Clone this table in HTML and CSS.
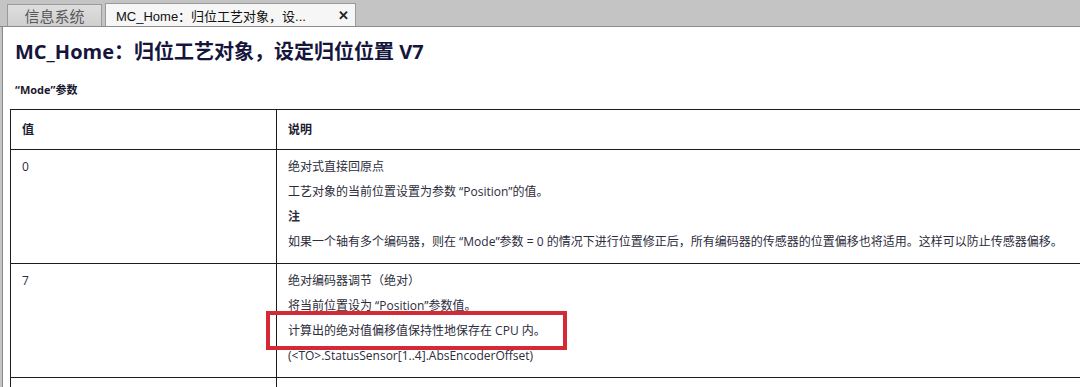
FILE: index.html
```html
<!DOCTYPE html>
<html lang="zh-CN">
<head>
<meta charset="utf-8">
<title>MC_Home</title>
<link rel="stylesheet" href="styles.css">
</head>
<body>
<div class="tabbar">
  <div class="tab tab-inactive">信息系统</div>
  <div class="tab tab-active"><span class="tab-label">MC_Home：归位工艺对象，设...</span><span class="tab-close">✕</span></div>
</div>
<div class="page">
  <h1 class="title">MC_Home：归位工艺对象，设定归位位置 V7</h1>
  <p class="caption">“Mode”参数</p>
  <div class="table-wrap">
    <table class="params">
      <thead>
        <tr><th class="col-val">值</th><th class="col-desc">说明</th></tr>
      </thead>
      <tbody>
        <tr>
          <td class="col-val"><p>0</p></td>
          <td class="col-desc">
            <p>绝对式直接回原点</p>
            <p>工艺对象的当前位置设置为参数 “Position”的值。</p>
            <p class="note">注</p>
            <p>如果一个轴有多个编码器，则在 “Mode”参数 = 0 的情况下进行位置修正后，所有编码器的传感器的位置偏移也将适用。这样可以防止传感器偏移。</p>
          </td>
        </tr>
        <tr>
          <td class="col-val"><p>7</p></td>
          <td class="col-desc">
            <p>绝对编码器调节（绝对）</p>
            <p>将当前位置设为 “Position”参数值。</p>
            <p><span class="highlight">计算出的绝对值偏移值保持性地保存在 CPU 内。</span></p>
            <p>(&lt;TO&gt;.StatusSensor[1..4].AbsEncoderOffset)</p>
          </td>
        </tr>
        <tr class="last">
          <td class="col-val"></td>
          <td class="col-desc"></td>
        </tr>
      </tbody>
    </table>
  </div>
</div>
</body>
</html>
```

FILE: styles.css
```css
* { box-sizing: border-box; }

html, body {
  margin: 0;
  padding: 0;
  width: 1080px;
  height: 387px;
  overflow: hidden;
  background: #c4c4c4;
  font-family: "Open Sans", "Noto Sans CJK SC", sans-serif;
}

.tabbar {
  height: 27px;
  display: flex;
  align-items: flex-end;
  padding-left: 7px;
  gap: 3px;
  border-bottom: 1px solid #8c8c8c;
  background: #c4c4c4;
}

.tab {
  height: 22px;
  display: flex;
  align-items: center;
  border: 1px solid #9a9a9a;
  border-bottom: none;
}

.tab-inactive {
  width: 95px;
  justify-content: center;
  background: linear-gradient(#dedede, #cfcfcf);
  color: #5a5a5a;
  font-family: "Noto Sans CJK SC", sans-serif;
  font-size: 15px;
}

.tab-active {
  width: 251px;
  height: 23px;
  background: #f6f6f6;
  padding: 0 6px 0 10px;
  justify-content: space-between;
  color: #111;
  font-size: 13px;
  font-family: "Liberation Sans", "Noto Sans CJK SC", sans-serif;
}

.tab-close {
  font-size: 13px;
  font-weight: bold;
  color: #222;
}

.page {
  margin-left: 2px;
  height: 360px;
  background: #fff;
  border-left: 1px solid #8a8a8a;
  padding: 12px 0 0 12px;
  overflow: hidden;
}

.title {
  margin: 0;
  font-size: 20px;
  line-height: 26px;
  font-weight: bold;
  color: #16163c;
  font-family: "Open Sans", "Noto Sans CJK SC", sans-serif;
}

.caption {
  margin: 18px 0 0 0;
  font-size: 11px;
  line-height: 14px;
  font-weight: bold;
  color: #1a1a2e;
}

.table-wrap {
  margin: 12px 0 0 -5px;
  width: 1200px;
}

.params {
  border-collapse: collapse;
  width: 1140px;
  color: #2c2c3c;
  font-size: 12px;
}

.params th,
.params td {
  border: 1.5px solid #1c1c1c;
  text-align: left;
  vertical-align: top;
}

.params th {
  height: 39px;
  padding: 7px 11px;
  line-height: 25px;
  font-weight: bold;
  color: #1c1c30;
  font-size: 12px;
}

.params td {
  padding: 4px 11px 9px 11px;
}

.col-val { width: 266px; }

.params p {
  margin: 0;
  line-height: 25px;
}

.params .note { font-weight: bold; }

.params tr.last td { height: 20px; }

.highlight {
  position: relative;
}

.highlight::after {
  content: "";
  position: absolute;
  left: -22px;
  right: -21px;
  top: -11px;
  bottom: -11px;
  border: 4px solid #d32a36;
}
```
